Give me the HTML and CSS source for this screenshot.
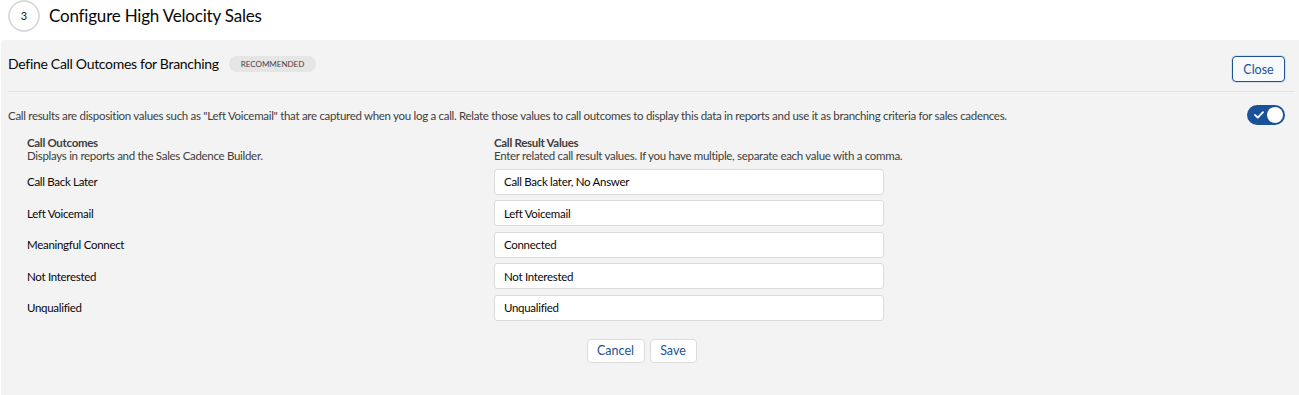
FILE: index.html
```html
<!DOCTYPE html>
<html lang="en">
<head>
  <meta charset="UTF-8">
  <meta name="viewport" content="width=device-width, initial-scale=1.0">
  <title>Configure High Velocity Sales</title>
  <link rel="stylesheet" href="styles.css">
</head>
<body>
  <div class="step-header">
    <div class="step-number">3</div>
    <h1 class="step-title">Configure High Velocity Sales</h1>
  </div>

  <div class="panel">
    <div class="panel-head">
      <h2 class="panel-title">Define Call Outcomes for Branching</h2>
      <span class="badge">RECOMMENDED</span>
      <button class="btn btn-close">Close</button>
    </div>
    <div class="divider"></div>

    <div class="intro">
      <p>Call results are disposition values such as "Left Voicemail" that are captured when you log a call. Relate those values to call outcomes to display this data in reports and use it as branching criteria for sales cadences.</p>
      <label class="toggle">
        <svg class="toggle-check" width="10" height="8" viewBox="0 0 10 8"><path d="M1 4l2.8 2.6L9 1.2" fill="none" stroke="#fff" stroke-width="1.8" stroke-linecap="round" stroke-linejoin="round"/></svg>
        <span class="toggle-knob"></span>
      </label>
    </div>

    <div class="outcomes">
      <div class="col-head">
        <strong>Call Outcomes</strong>
        <span>Displays in reports and the Sales Cadence Builder.</span>
      </div>
      <div class="col-head">
        <strong>Call Result Values</strong>
        <span>Enter related call result values. If you have multiple, separate each value with a comma.</span>
      </div>

      <div class="outcome-label">Call Back Later</div>
      <input class="outcome-input" type="text" value="Call Back later, No Answer">
      <div class="outcome-label">Left Voicemail</div>
      <input class="outcome-input" type="text" value="Left Voicemail">
      <div class="outcome-label">Meaningful Connect</div>
      <input class="outcome-input" type="text" value="Connected">
      <div class="outcome-label">Not Interested</div>
      <input class="outcome-input" type="text" value="Not Interested">
      <div class="outcome-label">Unqualified</div>
      <input class="outcome-input" type="text" value="Unqualified">
    </div>

    <div class="actions">
      <button class="btn btn-cancel">Cancel</button>
      <button class="btn btn-save">Save</button>
    </div>
  </div>
</body>
</html>
```

FILE: styles.css
```css
body {
  font-family: Lato, "Open Sans", sans-serif;
  background: #fff;
  color: #181818;
  margin: 0;
  overflow: hidden;
}
.step-header {
  display: flex;
  align-items: center;
  height: 31px;
  padding: 0 0 0 8px;
  gap: 9px;
}
.step-number {
  width: 28px;
  height: 28px;
  border: 2px solid #dcdcdc;
  border-radius: 50%;
  display: flex;
  align-items: center;
  justify-content: center;
  font-size: 11px;
  color: #181818;
}
.step-title {
  margin: 0;
  font-size: 17px;
  font-weight: 400;
  letter-spacing: -0.2px;
  color: #080707;
}
.panel {
  margin: 9px 0 0 1px;
  background: #f3f3f3;
  border-radius: 4px 0 0 0;
  padding: 14px 4px 32px 7px;
}
.panel-head {
  display: flex;
  align-items: flex-start;
  height: 28px;
  padding-right: 10px;
}
.panel-title {
  margin: 0;
  font-size: 14px;
  font-weight: 400;
  letter-spacing: -0.3px;
  line-height: 20px;
  color: #080707;
}
.badge {
  margin: 2px 0 0 10px;
  background: #e5e5e5;
  border-radius: 10px;
  padding: 0 12px;
  height: 16px;
  line-height: 16px;
  font-size: 8px;
  color: #444;
}
.btn {
  font-family: inherit;
  font-size: 12.5px;
  color: #1b5297;
  background: #fff;
  border: 1px solid #dddbda;
  border-radius: 4px;
  cursor: pointer;
  padding: 0;
}
.btn-close {
  margin: 2px 0 0 auto;
  width: 53px;
  height: 26px;
  border-color: #1b5297;
  background: #f8f9fb;
  box-shadow: 0 0 0 1px #d8e3f2;
}
.divider {
  margin-top: 9px;
  height: 1px;
  background: #e2e2e2;
}
.intro {
  display: flex;
  align-items: center;
  justify-content: space-between;
  padding: 12px 10px 0 0;
}
.intro p {
  margin: 3px 0 0;
  font-size: 11.5px;
  letter-spacing: -0.3px;
  line-height: 18px;
  color: #3e3e3c;
}
.toggle {
  position: relative;
  width: 38px;
  height: 20px;
  border-radius: 10px;
  background: #1b5297;
  display: flex;
  align-items: center;
  justify-content: space-between;
  padding: 0 2px 0 7px;
  box-sizing: border-box;
}
.toggle-knob {
  width: 16px;
  height: 16px;
  border-radius: 50%;
  background: #fff;
}
.outcomes {
  display: grid;
  grid-template-columns: 467px 390px;
  align-items: center;
  row-gap: 5.5px;
  padding: 11px 0 0 19px;
}
.col-head {
  display: flex;
  flex-direction: column;
  font-size: 11.5px;
  letter-spacing: -0.3px;
  line-height: 13px;
  color: #3e3e3c;
  white-space: nowrap;
  align-self: start;
  margin-bottom: 1px;
}
.col-head strong {
  font-weight: 700;
  color: #3e3e3c;
}
.outcome-label {
  font-size: 11.5px;
  letter-spacing: -0.3px;
  color: #080707;
}
.outcome-input {
  height: 26px;
  box-sizing: border-box;
  border: 1px solid #dddbda;
  border-radius: 3px;
  background: #fff;
  padding: 0 9px;
  font-family: inherit;
  font-size: 11.5px;
  letter-spacing: -0.3px;
  color: #080707;
  outline: none;
}
.actions {
  display: flex;
  justify-content: center;
  gap: 5px;
  margin: 18px 0 0 -20px;
}
.btn-cancel {
  width: 58px;
  height: 24px;
}
.btn-save {
  width: 47px;
  height: 24px;
}
```
